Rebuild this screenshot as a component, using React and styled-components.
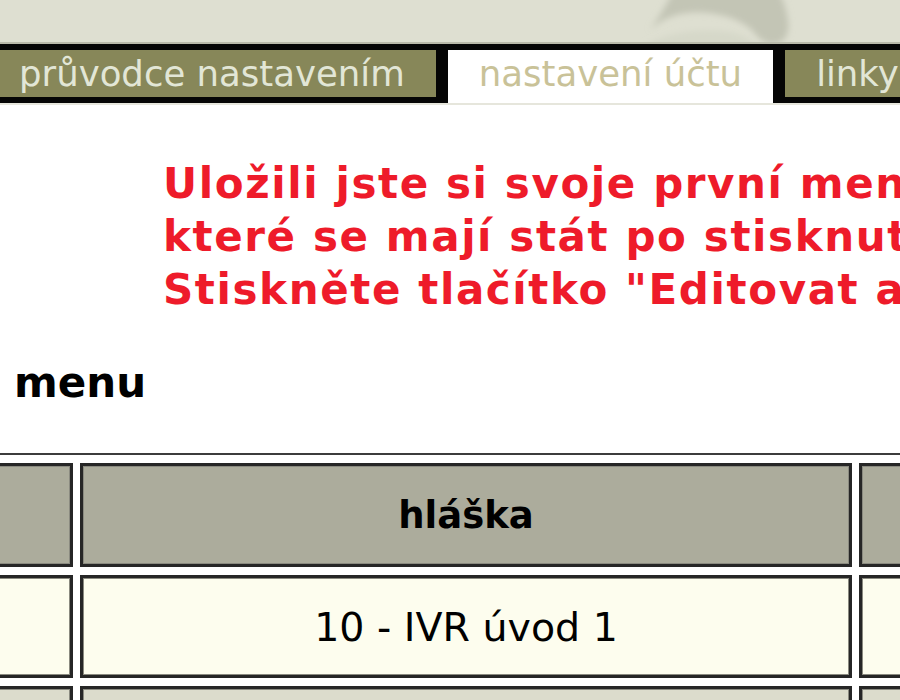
import styled, { createGlobalStyle } from "styled-components";

const GlobalStyle = createGlobalStyle`
  html, body {
    margin: 0;
    padding: 0;
    background: #ffffff;
    overflow: hidden;
  }
  body {
    font-family: "DejaVu Sans", Verdana, sans-serif;
    width: 900px;
    height: 700px;
  }
`;

const tabs = [
  { label: "průvodce nastavením" },
  { label: "nastavení účtu", active: true },
  { label: "linky" },
];

const Page = styled.div`
  width: 900px;
  height: 700px;
  overflow: hidden;
  background: #ffffff;
`;

const Header = styled.div`
  position: relative;
  height: 42px;
  background: #dedfd1;
  border-bottom: 2px solid #b9baaa;
  overflow: hidden;
`;

const Blob = styled.svg`
  position: absolute;
  left: 640px;
  top: -20px;
`;

const TabBar = styled.div`
  display: flex;
  align-items: flex-start;
  gap: 12px;
  padding-top: 6px;
  margin-left: -12px;
  background: #050505;
  border-bottom: 2px solid #e6e6dc;
  box-sizing: border-box;
  height: 61px;
`;

const Tab = styled.div`
  flex: none;
  padding: 0 31px;
  height: ${(p) => (p.$active ? "53px" : "47px")};
  line-height: 47px;
  font-size: 35.5px;
  white-space: nowrap;
  background: ${(p) => (p.$active ? "#ffffff" : "#878759")};
  color: ${(p) => (p.$active ? "#c9c298" : "#e2e6d6")};
`;

const Message = styled.div`
  margin-top: 52px;
  padding-left: 163px;
  color: #ee1b2a;
  font-weight: bold;
  font-size: 42px;
  letter-spacing: 1.6px;
  line-height: 53px;
  white-space: nowrap;
  overflow: hidden;
`;

const Heading = styled.h2`
  margin: 42px 0 0 14px;
  font-size: 42px;
  line-height: 50px;
  font-weight: bold;
  color: #000000;
`;

const Table = styled.table`
  width: 1206px;
  margin-top: 45px;
  margin-left: -40px;
  border-collapse: separate;
  border-spacing: 7px 8px;
  border-top: 2px solid #3c3c3c;
  table-layout: fixed;
`;

const Cell = styled.td`
  box-sizing: border-box;
  height: ${(p) => (p.$head ? "104px" : "103px")};
  border: 3px solid #262626;
  box-shadow: inset 0 0 0 1px #8a8a80;
  background: ${(p) => p.$bg};
  text-align: center;
  vertical-align: middle;
  font-size: ${(p) => (p.$head ? "37px" : "39.5px")};
  font-weight: ${(p) => (p.$head ? "bold" : "normal")};
  color: #000000;
  white-space: nowrap;
  padding: 0;
`;

const rows = [
  { bg: "#acac9c", head: true, text: "hláška" },
  { bg: "#fdfdee", text: "10 - IVR úvod 1" },
  { bg: "#dcdccc", text: "" },
];

export default function App() {
  return (
    <Page>
      <GlobalStyle />
      <Header>
        <Blob width="200" height="70" viewBox="0 0 200 70">
          <defs>
            <filter id="soft" x="-20%" y="-20%" width="140%" height="140%">
              <feGaussianBlur stdDeviation="3" />
            </filter>
          </defs>
          <path
            d="M10 50 C30 30 60 30 80 35 C95 38 105 44 112 50 C118 58 125 64 132 64 C145 64 150 54 148 40 C146 26 140 10 130 0 L40 0 C30 18 20 36 10 50 Z"
            fill="#c3c5b5"
            filter="url(#soft)"
          />
          <path
            d="M0 70 C20 52 60 48 90 52 C110 56 118 66 120 70 Z"
            fill="#d6d8c9"
            filter="url(#soft)"
          />
        </Blob>
      </Header>
      <TabBar>
        {tabs.map((t) => (
          <Tab key={t.label} $active={t.active}>
            {t.label}
          </Tab>
        ))}
      </TabBar>
      <Message>
        <div>Uložili jste si svoje první menu</div>
        <div>které se mají stát po stisknutí</div>
        <div>Stiskněte tlačítko "Editovat ak</div>
      </Message>
      <Heading>menu</Heading>
      <Table>
        <colgroup>
          <col style={{ width: 106 }} />
          <col style={{ width: 772 }} />
          <col style={{ width: 300 }} />
        </colgroup>
        <tbody>
          {rows.map((r, i) => (
            <tr key={i}>
              <Cell $bg={r.bg} $head={r.head} />
              <Cell $bg={r.bg} $head={r.head}>
                {r.text}
              </Cell>
              <Cell $bg={r.bg} $head={r.head} />
            </tr>
          ))}
        </tbody>
      </Table>
    </Page>
  );
}
